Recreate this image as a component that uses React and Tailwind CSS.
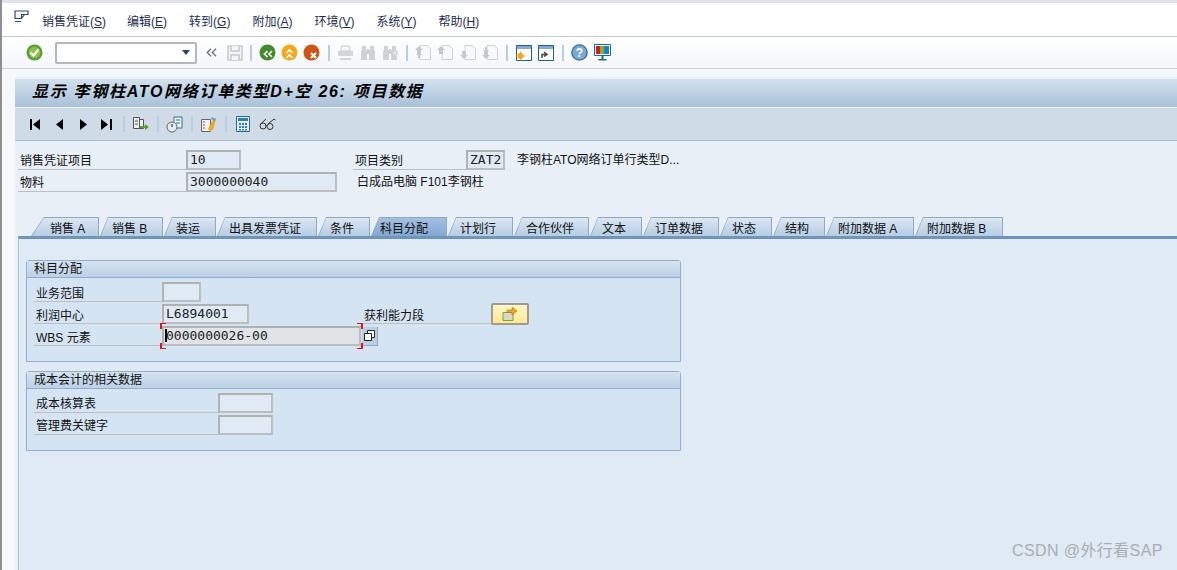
const cjk = "font-['Liberation_Sans','Noto_Sans_CJK_SC',sans-serif]";

const menus = [
  ['销售凭证', 'S', '-mr-px'], ['编辑', 'E', ''], ['转到', 'G', ''], ['附加', 'A', ''], ['环境', 'V', ''], ['系统', 'Y', ''], ['帮助', 'H', ''],
];

const slantTab = '[clip-path:polygon(8px_0,100%_0,100%_100%,0_100%)]';
const slantInner = '[clip-path:polygon(8px_0,100%_0,100%_100%,1px_100%)]';

const tabs = [
  { name: '销售 A', width: 'w-[68px]', pad: 'pl-[19px]', outer: '[clip-path:polygon(13px_0,100%_0,100%_100%,0_100%)]', inner: '[clip-path:polygon(13px_0,100%_0,100%_100%,1px_100%)]' },
  { name: '销售 B', width: 'w-[63px]' },
  { name: '装运', width: 'w-[52px]' },
  { name: '出具发票凭证', width: 'w-[100px]' },
  { name: '条件', width: 'w-[52px]' },
  { name: '科目分配', width: 'w-[76px]', pad: 'pl-[9px]', active: true },
  { name: '计划行', width: 'w-[65px]' },
  { name: '合作伙伴', width: 'w-[75px]' },
  { name: '文本', width: 'w-[52px]' },
  { name: '订单数据', width: 'w-[76px]' },
  { name: '状态', width: 'w-[52px]' },
  { name: '结构', width: 'w-[52px]' },
  { name: '附加数据 A', width: 'w-[88px]' },
  { name: '附加数据 B', width: 'w-[88px]' },
];

function Sep() {
  return <div className="w-[2px] h-[16px] bg-[#b9cde0] mx-[4.5px] shrink-0" />;
}

function Slot({ children, className = 'w-[22.4px]' }) {
  return <div className={`${className} h-[22px] flex items-center justify-center shrink-0`}>{children}</div>;
}

function Round({ fill, children }) {
  return (
    <svg width="17" height="17" viewBox="0 0 17 17">
      <circle cx="8.5" cy="8.5" r="8" fill={fill} />
      {children}
    </svg>
  );
}

function Binoculars({ plus }) {
  return (
    <svg width="16" height="16" viewBox="0 0 16 16" fill="#d0d3d6">
      <path d="M2 1h4v4h1V4h2v1h1V1h4v4l1 1v9H9V9H7v6H1V6l1-1z" />
      {plus && <path d="M10 7h2V5h2v2h2v2h-2v2h-2V9h-2z" fill="#e4e6e8" stroke="#c4c7ca" strokeWidth="0.5" />}
    </svg>
  );
}

function PageArrow({ dir, double }) {
  const up = dir === 'up';
  return (
    <svg width="17" height="17" viewBox="0 0 17 17" fill="none">
      <path d="M5 1.5h7l3.5 3v11H5z" fill="#f7f8fa" stroke="#cfd2d5" />
      {up
        ? <path d="M4 2l4 4H6v4H2V6H0z" fill="#c6c9cc" />
        : <path d="M4 15l4-4H6V7H2v4H0z" fill="#c6c9cc" />}
      {double && (up
        ? <path d="M4 8l3 3H5v3H3v-3H1z" fill="#c6c9cc" />
        : <path d="M4 9L7 6H5V3H3v3H1z" fill="#c6c9cc" />)}
    </svg>
  );
}

function Field({ className, children }) {
  return (
    <div className={`${className} shrink-0 border-2 border-[#b0b1b1] border-b-[#bcbdbd] border-r-[#bcbdbd] bg-[#dfeaf4] pl-[2px] font-['DejaVu_Sans_Mono',monospace] text-[13px] leading-[15px] text-[#222]`}>
      {children}
    </div>
  );
}

function Label({ className, children }) {
  return (
    <div className={`${className} shrink-0 h-full border-b border-[#bdbfc0] pl-[2px] text-[12px] leading-[22px] text-[#111]`}>
      {children}
    </div>
  );
}

function GroupBox({ title, className, children }) {
  return (
    <div className={`${className} w-[655px] rounded-t-[3px] border border-[#91aece] bg-[#d4e4f2]`}>
      <div className="h-[17px] border-b border-[#91aece] bg-gradient-to-b from-[#d5e3f0] to-[#bcd1e6] pl-[7px] text-[12px] leading-[16px] text-[#111]">
        {title}
      </div>
      {children}
    </div>
  );
}

export default function App() {
  return (
    <div className={`${cjk} relative w-[1177px] h-[570px] overflow-hidden flex flex-col border-l-2 border-[#8d8f91] bg-[#f6f9fc]`}>
      <div className="h-[3px] bg-[#dfe3e7]" />

      {/* menu bar */}
      <div className="h-[34px] flex items-center pl-[12px] bg-white border-b border-[#c9cdd1]">
        <svg width="16" height="14" viewBox="0 0 16 14" fill="none" stroke="#33476f" strokeWidth="1.2" className="mb-[5px]">
          <path d="M1 1h13v3.5H7.5v4H1zM7.5 8.5l3-4M1 11.5h6" />
        </svg>
        <div className="flex gap-[22px] ml-[12px] mt-[5px] text-[12px] text-[#1d2c52]">
          {menus.map(([name, key, extra]) => (
            <span key={key} className={`${extra} whitespace-nowrap`}>{name}(<span className="underline">{key}</span>)</span>
          ))}
        </div>
      </div>

      {/* system toolbar */}
      <div className="h-[32px] flex items-center pl-[21px] bg-gradient-to-b from-white to-[#f3f6f9] border-b border-[#cdd2d6]">
        <Slot className="w-[22px]">
          <svg width="17" height="17" viewBox="0 0 17 17">
            <circle cx="8.5" cy="8.5" r="8" fill="#5a9e32" />
            <circle cx="8.5" cy="8.5" r="5.8" fill="#8cc04f" />
            <path d="M4.5 8.5l3 3 5-6" fill="none" stroke="#fff" strokeWidth="2.2" />
          </svg>
        </Slot>
        <div className="w-[142px] h-[22px] ml-[10px] flex items-center justify-end pr-[4px] rounded-[2px] border-2 border-[#b5b7b9] bg-white shrink-0">
          <svg width="10" height="6" viewBox="0 0 10 6"><path d="M1 0h8L5 5z" fill="#26436f" /></svg>
        </div>
        <Slot className="w-[28px]">
          <svg width="11" height="9" viewBox="0 0 11 9" fill="none" stroke="#6b7683" strokeWidth="1.4"><path d="M5 .8L1.3 4.5 5 8.2M10 .8L6.3 4.5 10 8.2" /></svg>
        </Slot>
        <Slot className="w-[20px]">
          <svg width="16" height="16" viewBox="0 0 16 16" fill="#f4f5f6" stroke="#c6c9cc" strokeWidth="1.5">
            <path d="M1 1h14v14H1z" /><path d="M4 1v5h8V1M4 15v-5h8v5" />
          </svg>
        </Slot>
        <Sep />
        <Slot>
          <Round fill="#458a2a"><path d="M8.5 7L5.5 10l3 3M13 7l-3 3 3 3" fill="none" stroke="#fff" strokeWidth="1.7" /></Round>
        </Slot>
        <Slot>
          <Round fill="#f4a81c"><path d="M5.5 9l3-3 3 3M5.5 14l3-3 3 3" fill="none" stroke="#fff" strokeWidth="1.7" /></Round>
        </Slot>
        <Slot>
          <Round fill="#cf5317"><path d="M8 9l5 5M13 9l-5 5" fill="none" stroke="#fff" strokeWidth="2" /></Round>
        </Slot>
        <Sep />
        <Slot>
          <svg width="17" height="16" viewBox="0 0 17 16" fill="#d2d5d8">
            <path d="M5 1h7l1 1v4H4V2z" fill="#f4f5f6" stroke="#c8cbce" />
            <path d="M1 6h15v5H1z" /><path d="M3 13h11v2H3z" />
          </svg>
        </Slot>
        <Slot><Binoculars /></Slot>
        <Slot><Binoculars plus /></Slot>
        <Sep />
        <Slot><PageArrow dir="up" double /></Slot>
        <Slot><PageArrow dir="up" /></Slot>
        <Slot><PageArrow dir="down" /></Slot>
        <Slot><PageArrow dir="down" double /></Slot>
        <Sep />
        <Slot>
          <svg width="16" height="16" viewBox="0 0 16 16">
            <path d="M.5.5h15v15H.5z" fill="#fff" stroke="#1f5f8e" /><path d="M1 1h14v3H1z" fill="#86a9cf" />
            <circle cx="4.5" cy="11" r="3" fill="#f7a416" /><path d="M4.5 6.5v9M0 11h9" stroke="#f7a416" />
          </svg>
        </Slot>
        <Slot>
          <svg width="16" height="16" viewBox="0 0 16 16">
            <path d="M.5.5h15v15H.5z" fill="#fff" stroke="#1f5f8e" /><path d="M1 1h14v3H1z" fill="#86a9cf" />
            <path d="M4 13V9.5h4M6 7l3 2.5-3 2" fill="none" stroke="#444" strokeWidth="1.5" />
          </svg>
        </Slot>
        <Sep />
        <Slot>
          <svg width="17" height="17" viewBox="0 0 17 17">
            <circle cx="8.5" cy="8.5" r="7.6" fill="#7da9d2" stroke="#2f6f9f" strokeWidth="1.4" />
            <text x="8.5" y="13" textAnchor="middle" fontSize="12" fontWeight="700" fill="#fff" fontFamily="Liberation Sans">?</text>
          </svg>
        </Slot>
        <Slot>
          <svg width="17" height="17" viewBox="0 0 17 17">
            <path d="M.5.5h16v11H.5z" fill="#fff" stroke="#1b6a95" />
            <path d="M2 2h4v8H2z" fill="#d8181f" /><path d="M6 2h4v8H6z" fill="#7fb23a" /><path d="M10 2h5v8h-5z" fill="#1f7fc4" />
            <path d="M7.5 12h2v3h-2zM4.5 15h8v1.5h-8z" fill="#1b6a95" />
          </svg>
        </Slot>
      </div>

      {/* screen area */}
      <div className="flex-1 min-h-0 pl-[13px] pt-[8px] flex flex-col">
        <div className="flex-1 min-h-0 flex flex-col bg-[#e8eff6]">
          <div className="h-[31px] shrink-0 border-t-2 border-[#a2b6cb] bg-gradient-to-b from-[#d3e1ee] to-[#a9c1d9] pl-[17px] border-b border-[#eef3f8] text-[16px] leading-[25px] font-bold italic text-black tracking-[1.7px] whitespace-nowrap">
            显示 李钢柱ATO网络订单类型D+空 26: 项目数据
          </div>

          {/* application toolbar */}
          <div className="h-[33px] shrink-0 flex items-center pl-[8px] bg-[#cfdce8] border-b border-[#a9bbcd]">
            <Slot className="w-[24px]"><svg width="11" height="11" viewBox="0 0 11 11"><path d="M0 0h2v11H0zM10 0v11L3 5.5z" /></svg></Slot>
            <Slot className="w-[24px]"><svg width="7" height="11" viewBox="0 0 7 11"><path d="M7 0v11L0 5.5z" /></svg></Slot>
            <Slot className="w-[24px]"><svg width="7" height="11" viewBox="0 0 7 11"><path d="M0 0v11l7-5.5z" /></svg></Slot>
            <Slot className="w-[23px]"><svg width="11" height="11" viewBox="0 0 11 11"><path d="M0 0v11l7-5.5zM9 0h2v11H9z" /></svg></Slot>
            <Sep />
            <Slot className="w-[23px]">
              <svg width="17" height="17" viewBox="0 0 17 17" fill="none" stroke="#555">
                <path d="M1.5 1.5h6v11h-6zM7.5 3.5h4v9h-4z" fill="#eef1f4" /><path d="M3 5h3M3 8h3" /><path d="M8 10h5V8l4 3-4 3v-2H8z" fill="#5b9f3a" stroke="none" />
              </svg>
            </Slot>
            <Sep />
            <Slot className="w-[23px]">
              <svg width="17" height="17" viewBox="0 0 17 17" fill="none">
                <path d="M8 1h8v11H8z" fill="#eef3f8" stroke="#2d6f9f" /><path d="M10 4h4M10 7h4" stroke="#2d6f9f" />
                <circle cx="6" cy="11" r="5" fill="#e6ebf0" stroke="#666" /><path d="M6 8v3" stroke="#2d6f9f" strokeWidth="1.5" />
              </svg>
            </Slot>
            <Sep />
            <Slot className="w-[23px]">
              <svg width="17" height="17" viewBox="0 0 17 17" fill="none">
                <path d="M1.5 3.5h9v12h-9z" fill="#f4f4f0" stroke="#666" /><path d="M3 6h2M3 9h2M3 12h2" stroke="#c33" />
                <path d="M8 13l6-11 2 1-3 11-3 1z" fill="#f2a32a" /><path d="M12 1l4 2-1 2-4-2z" fill="#6f9fd0" />
              </svg>
            </Slot>
            <Sep />
            <Slot className="w-[23px]">
              <svg width="14" height="16" viewBox="0 0 14 16">
                <path d="M.5.5h13v15H.5z" fill="#e8f0f6" stroke="#1f6a9a" /><path d="M2 2h10v3H2z" fill="#2f7fb5" />
                <path d="M3 7h2v2H3zM6 7h2v2H6zM9 7h2v2H9zM3 10h2v2H3zM6 10h2v2H6zM9 10h2v2H9zM3 13h2v1.5H3zM6 13h2v1.5H6zM9 13h2v1.5H9z" fill="#2f7fb5" />
              </svg>
            </Slot>
            <Slot className="w-[26px]">
              <svg width="17" height="12" viewBox="0 0 17 12" fill="none" stroke="#333">
                <circle cx="4" cy="8" r="3" /><circle cx="11" cy="8.5" r="3" /><path d="M7 8l1-.5M1.5 6L7 1M9 6l6-5 1.5 1" />
              </svg>
            </Slot>
          </div>

          {/* header fields */}
          <div className="pl-[3px] pt-[9px] shrink-0">
            <div className="flex items-center h-[20px]">
              <Label className="w-[168px]">销售凭证项目</Label>
              <Field className="w-[55px] h-[20px]">10</Field>
              <Label className="w-[113px] ml-[112px]">项目类别</Label>
              <Field className="w-[39px] h-[20px]">ZAT2</Field>
              <span className="ml-[12px] text-[12px] text-[#111] whitespace-nowrap">李钢柱ATO网络订单行类型D...</span>
            </div>
            <div className="flex items-center h-[20px] mt-[2px]">
              <Label className="w-[168px]">物料</Label>
              <Field className="w-[151px] h-[20px]">3000000040</Field>
              <span className="ml-[20px] text-[12px] text-[#111] whitespace-nowrap">白成品电脑 F101李钢柱</span>
            </div>
          </div>

          {/* tab strip */}
          <div className="flex items-end gap-px h-[19px] mt-[25px] ml-[16px] shrink-0">
            {tabs.map((tab) => (
              <div key={tab.name} className={`${tab.width} ${tab.outer || slantTab} h-[19px] shrink-0 bg-[#8ea8c5] pt-px pr-px`}>
                <div className={`${tab.pad || 'pl-[12px]'} ${tab.inner || slantInner} h-full text-[12px] leading-[23px] text-[#111] whitespace-nowrap ${tab.active ? 'bg-gradient-to-b from-[#a3bfdf] to-[#82a8d3]' : 'bg-gradient-to-b from-[#dbe7f2] to-[#b6cde4]'}`}>
                  {tab.name}
                </div>
              </div>
            ))}
          </div>

          {/* tab panel */}
          <div className="flex-1 min-h-0 ml-[3px] pl-[7px] pt-[21px] border-t-[3px] border-l border-t-[#6f94bd] border-l-[#a4bcd6] bg-[#dfeaf5]">
            <GroupBox title="科目分配" className="h-[102px]">
              <div className="pl-[7px] pt-[4px]">
                <div className="flex items-center h-[20px]">
                  <Label className="w-[128px] pt-px">业务范围</Label>
                  <Field className="w-[39px] h-[20px]" />
                </div>
                <div className="flex items-center h-[20px] mt-[2px]">
                  <Label className="w-[128px] pt-px">利润中心</Label>
                  <Field className="w-[87px] h-[20px]">L6894001</Field>
                  <Label className="w-[129px] ml-[113px] pt-px">获利能力段</Label>
                  <div className="w-[38px] h-[22px] shrink-0 flex items-center justify-center rounded-[2px] border-2 border-[#9c9c94] bg-gradient-to-b from-[#fff6c4] to-[#ffe890]">
                    <svg width="16" height="14" viewBox="0 0 16 14">
                      <path d="M1 5.5h10v8H1z" fill="#d9d9c8" stroke="#7fa03c" />
                      <path d="M5 3h5V0l5 4-5 4V5.5H5z" fill="#f2a51f" stroke="#8a6a20" strokeWidth="0.5" />
                    </svg>
                  </div>
                </div>
                <div className="flex items-center h-[20px] mt-[2px]">
                  <Label className="w-[128px] pt-px">WBS 元素</Label>
                  <div className="relative shrink-0">
                    <Field className="w-[199px] h-[20px] bg-[#e0e4e8]">0000000026-00</Field>
                    {/* focus cursor and red corner marks */}
                    <div className="absolute left-[3px] top-[3px] w-[2px] h-[13px] bg-black" />
                    <div className="absolute -left-[2px] -top-[3px] w-[6px] h-[6px] border-l-2 border-t border-[#e0141c]" />
                    <div className="absolute -right-[2px] -top-[3px] w-[6px] h-[6px] border-r-2 border-t border-[#e0141c]" />
                    <div className="absolute -left-[2px] -bottom-[3px] w-[6px] h-[6px] border-l-2 border-b border-[#e0141c]" />
                    <div className="absolute -right-[2px] -bottom-[3px] w-[6px] h-[6px] border-r-2 border-b border-[#e0141c]" />
                  </div>
                  <div className="w-[16px] h-[19px] ml-px shrink-0 flex items-center justify-center bg-[#bccfe2] border-r border-b border-[#9aa7b4]">
                    <svg width="11" height="11" viewBox="0 0 11 11" fill="#fff" stroke="#222">
                      <path d="M3.5.5h7v7h-7z" /><path d="M.5 3.5h7v7h-7z" />
                    </svg>
                  </div>
                </div>
              </div>
            </GroupBox>

            <GroupBox title="成本会计的相关数据" className="h-[80px] mt-[9px]">
              <div className="pl-[7px] pt-[4px]">
                <div className="flex items-center h-[20px]">
                  <Label className="w-[184px]">成本核算表</Label>
                  <Field className="w-[55px] h-[20px]" />
                </div>
                <div className="flex items-center h-[20px] mt-[2px]">
                  <Label className="w-[184px]">管理费关键字</Label>
                  <Field className="w-[55px] h-[20px]" />
                </div>
              </div>
            </GroupBox>
          </div>
        </div>
      </div>

      {/* csdn watermark */}
      <div className="absolute left-[1010px] top-[541px] text-[16px] leading-[20px] tracking-[0.4px] text-[#a9adb1] whitespace-nowrap">
        CSDN @外行看SAP
      </div>
    </div>
  );
}
